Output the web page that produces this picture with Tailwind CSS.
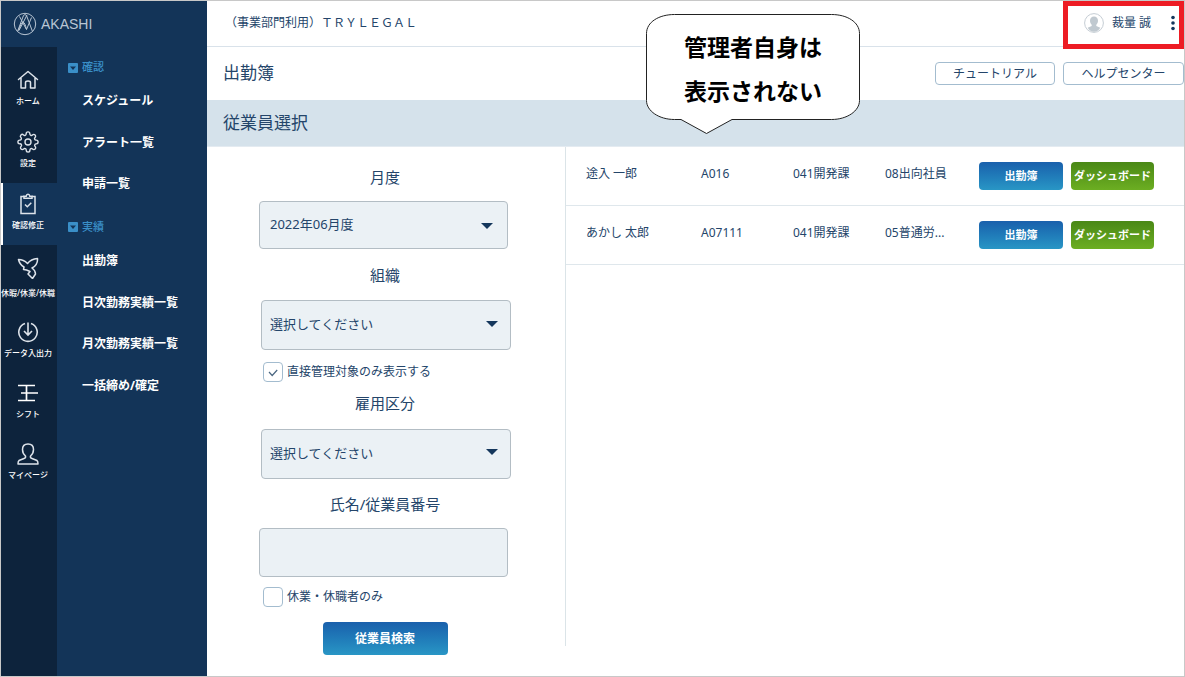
<!DOCTYPE html>
<html lang="ja">
<head>
<meta charset="utf-8">
<meta name="viewport" content="width=device-width, initial-scale=1">
<title>AKASHI 出勤簿</title>
<script src="https://cdn.jsdelivr.net/npm/@tailwindcss/browser@4"></script>
</head>
<body class="bg-white font-['Noto_Sans','Noto_Sans_CJK_JP',sans-serif] text-[#24456a]">
<div class="relative flex min-h-screen border border-[#c8c8c8]">

  <!-- Sidebar -->
  <div class="flex w-[206px] shrink-0 flex-col bg-[#133458]">
    <a href="#" class="flex h-[46px] items-center gap-1 pl-3 text-[#b9c6d4]">
      <svg class="size-6" viewBox="0 0 24 24" fill="none" stroke="currentColor" stroke-width="1"><circle cx="12" cy="12" r="10.7"/><path d="M4.500 19.500L10.500 3.500Q12 1.500 13.500 3.500L19.500 19.500M5.500 18.500Q8 11 10 10Q12 10.500 13.500 17.500L18.500 5.500M6.500 4.500L13.500 17.500M14 3L6 18.500"/></svg>
      <span class="font-['Liberation_Sans',sans-serif] text-[14px] leading-5">AKASHI</span>
    </a>
    <div class="flex grow">
      <nav aria-label="メイン" class="w-14 shrink-0 bg-[#0d233c] pt-3 text-[8px] leading-3 font-medium text-white">
        <a href="#" class="flex h-[62px] flex-col items-center gap-1 overflow-hidden pt-[10px] pr-[2px] whitespace-nowrap">
          <svg class="size-[22px] shrink-0" viewBox="0 0 22 22" fill="none" stroke="#dde3ea" stroke-width="1.500" stroke-linejoin="round" stroke-linecap="round"><path d="M1.500 10.500L11 2.500l9.500 8M4 9v10h4.500v-5.500q0-1.500 2.500-1.500t2.500 1.500V19H18V9"/></svg>
          ホーム
        </a>
        <a href="#" class="flex h-[62px] flex-col items-center gap-1 overflow-hidden pt-[10px] pr-[2px] whitespace-nowrap">
          <svg class="size-[22px] shrink-0" viewBox="0 0 24 24" fill="none" stroke="#dde3ea" stroke-width="1.500" stroke-linejoin="round"><circle cx="12" cy="12" r="3.300"/><path d="M19.400 15a1.650 1.650 0 0 0 .33 1.820l.06.06a2 2 0 1 1-2.830 2.830l-.06-.06a1.650 1.650 0 0 0-2.800 1.170V21a2 2 0 0 1-4 0v-.09a1.650 1.650 0 0 0-2.800-1.260l-.06.06a2 2 0 1 1-2.830-2.830l.06-.06A1.650 1.650 0 0 0 3.090 14H3a2 2 0 0 1 0-4h.09a1.650 1.650 0 0 0 1.260-2.800l-.06-.06a2 2 0 1 1 2.830-2.830l.06.06a1.650 1.650 0 0 0 2.820-1.280V3a2 2 0 0 1 4 0v.09a1.650 1.650 0 0 0 2.800 1.260l.06-.06a2 2 0 1 1 2.830 2.830l-.06.06A1.650 1.650 0 0 0 20.910 10H21a2 2 0 0 1 0 4h-.09a1.650 1.650 0 0 0-1.510 1z"/></svg>
          設定
        </a>
        <a href="#" aria-current="page" class="flex h-[62px] flex-col items-center gap-1 overflow-hidden border-l-2 border-white bg-[#133458] pt-[10px] pr-1 whitespace-nowrap">
          <svg class="size-[22px] shrink-0" viewBox="0 0 22 22" fill="none" stroke="#dde3ea" stroke-width="1.500"><path d="M7 3.500H4v17h14v-17h-3"/><path d="M7 5.200V3.200h2.200q.3-1.900 1.800-1.900t1.800 1.900H15v2z"/><path d="M8 11.500l2.300 2.200 4-4"/></svg>
          確認修正
        </a>
        <a href="#" class="flex h-[66px] flex-col items-center gap-2 overflow-hidden pt-3 pr-[2px] whitespace-nowrap">
          <svg class="size-[22px] shrink-0" viewBox="0 0 22 22" fill="none" stroke="#dde3ea" stroke-width="1.500" stroke-linejoin="round"><path d="M1.500 2.500Q6.500 2.500 10.500 6.500Q14 2 20.500 1.500Q21 8 15 11Q18.500 13.500 18.500 17L15.500 21.500L11 17L13 14.500Q9.500 12.500 6.500 12.500L7 10Q2.500 7.500 1.500 2.500z"/></svg>
          <span>休暇/休業/休職</span>
        </a>
        <a href="#" class="flex h-[61px] flex-col items-center gap-1 overflow-hidden pt-[10px] pr-[2px] whitespace-nowrap">
          <svg class="size-[22px] shrink-0" viewBox="0 0 22 22" fill="none" stroke="#dde3ea" stroke-width="1.600"><path d="M8 2.500A9.200 9.200 0 1 0 14 2.500M11 1.500v12M7 10l4 4 4-4"/></svg>
          データ入出力
        </a>
        <a href="#" class="flex h-[61px] flex-col items-center gap-1 overflow-hidden pt-[10px] pr-[2px] whitespace-nowrap">
          <svg class="size-[22px] shrink-0" viewBox="0 0 22 22" fill="none" stroke="#fff" stroke-width="1.700"><path d="M1 3.500h17M4 11h17M1 18.500h17M9.500 3.500v15"/></svg>
          シフト
        </a>
        <a href="#" class="flex h-[62px] flex-col items-center gap-1 overflow-hidden pt-[10px] pr-[2px] whitespace-nowrap">
          <svg class="size-[22px] shrink-0" viewBox="0 0 22 22" fill="none" stroke="#dde3ea" stroke-width="1.500" stroke-linejoin="round"><path d="M8.500 13Q5.500 10.500 5.500 6.500Q5.500 1 11 1t5.500 5.500Q16.500 10.500 13.500 13q-.5 2 1.500 2.500l5 2Q21 18.500 21 21H1q0-2.500 1-3.500l5-2Q9 15 8.500 13z"/></svg>
          マイページ
        </a>
      </nav>
      <nav aria-label="確認修正" class="grow pt-2 pl-[11px] text-[12px] font-bold text-white">
        <h2 class="flex h-[25px] items-center gap-1 text-[11px] font-medium text-[#3a8fc8]">
          <svg class="size-[10px]" viewBox="0 0 10 10"><rect width="10" height="10" rx="1" fill="#3a8fc8"/><path d="M2 3.500h6L5 7z" fill="#133458"/></svg>確認</h2>
        <ul class="pl-[14px]">
          <li><a href="#" class="flex h-[42px] items-center">スケジュール</a></li>
          <li><a href="#" class="flex h-[41px] items-center">アラート一覧</a></li>
          <li><a href="#" class="flex h-[41px] items-center">申請一覧</a></li>
        </ul>
        <h2 class="mt-[10px] flex h-[26px] items-center gap-1 text-[11px] font-medium text-[#3a8fc8]">
          <svg class="size-[10px]" viewBox="0 0 10 10"><rect width="10" height="10" rx="1" fill="#3a8fc8"/><path d="M2 3.500h6L5 7z" fill="#133458"/></svg>実績</h2>
        <ul class="pl-[14px]">
          <li><a href="#" class="flex h-[42px] items-center">出勤簿</a></li>
          <li><a href="#" class="flex h-[41px] items-center">日次勤務実績一覧</a></li>
          <li><a href="#" class="flex h-[42px] items-center">月次勤務実績一覧</a></li>
          <li><a href="#" class="flex h-[41px] items-center">一括締め/確定</a></li>
        </ul>
      </nav>
    </div>
  </div>

  <div class="flex min-w-0 grow flex-col">
    <header class="flex h-[46px] items-center justify-between border-b border-[#d9e2ea] pl-[18px] text-[12px]">
      <p class="pb-[2px] leading-5">（事業部門利用）ＴＲＹＬＥＧＡＬ</p>
      <button type="button" class="flex items-center gap-2 pr-[9px] pb-[2px] leading-5">
        <svg class="size-5" viewBox="0 0 20 20"><circle cx="10" cy="10" r="9.400" fill="#fff" stroke="#c5cdd4"/><path d="M10 3.500c2.500 0 4 1.700 4 4.200 0 1.700-.8 3.200-1.700 4v1.300l4 1.700Q14 18.800 10 18.800T3.700 14.700l4-1.700v-1.300C6.800 10.900 6 9.400 6 7.700c0-2.500 1.500-4.200 4-4.200z" fill="#c0c9d0"/></svg>
        <span>裁量 誠</span>
        <svg class="ml-3 h-4 w-1" viewBox="0 0 4 16" fill="#14375c"><circle cx="2" cy="2.500" r="1.800"/><circle cx="2" cy="8" r="1.800"/><circle cx="2" cy="13.500" r="1.800"/></svg>
      </button>
    </header>

    <div class="flex h-[53px] items-center justify-between pl-4">
      <h1 class="pb-[2px] text-[17px] leading-6">出勤簿</h1>
      <div class="flex gap-2 text-[12px] leading-5">
        <a href="#" class="flex h-[23px] w-[120px] items-center justify-center rounded border border-[#a3bccf]">チュートリアル</a>
        <a href="#" class="flex h-[23px] w-[121px] items-center justify-center rounded border border-[#a3bccf]">ヘルプセンター</a>
      </div>
    </div>
    <h2 class="flex h-[47px] items-center border-b border-[#e4ebf1] bg-[#d5e2eb] pl-4 text-[17px] leading-6">従業員選択</h2>

    <main class="flex grow items-start">
      <form class="flex w-[358px] shrink-0 flex-col items-center pt-[18px] pr-[2px]">
        <div class="flex w-[252px] flex-col">
          <label for="month" class="mb-3 text-center text-[15px] leading-6">月度</label>
          <div class="relative mr-[3px]">
            <select id="month" class="block h-[48px] w-full appearance-none rounded border border-[#b3bdc4] bg-[#ebf1f5] px-[10px] text-[13px]"><option>2022年06月度</option></select>
            <svg class="pointer-events-none absolute top-[22px] right-[15px] h-[6px] w-3" viewBox="0 0 12 6"><path d="M0 0h12L6 6z" fill="#14375c"/></svg>
          </div>

          <label for="org" class="mt-[14px] mb-[13px] text-center text-[15px] leading-6">組織</label>
          <div class="relative ml-[2px]">
            <select id="org" class="block h-[50px] w-full appearance-none rounded border border-[#b3bdc4] bg-[#ebf1f5] px-2 text-[13px]"><option>選択してください</option></select>
            <svg class="pointer-events-none absolute top-[21px] right-[13px] h-[6px] w-3" viewBox="0 0 12 6"><path d="M0 0h12L6 6z" fill="#14375c"/></svg>
          </div>
          <div class="mt-3 flex h-5 items-center gap-1 pl-1">
            <span class="relative flex">
              <input id="direct" type="checkbox" checked class="peer size-5 appearance-none rounded border border-[#a3bccf] bg-white">
              <svg class="pointer-events-none absolute inset-0 hidden size-5 peer-checked:block" viewBox="0 0 20 20" fill="none" stroke="#4a6680" stroke-width="1.200"><path d="M6 10l3.200 3.500 5-5.500"/></svg>
            </span>
            <label for="direct" class="text-[12px] leading-5 whitespace-nowrap">直接管理対象のみ表示する</label>
          </div>

          <label for="kind" class="mt-[9px] mb-[14px] text-center text-[15px] leading-6">雇用区分</label>
          <div class="relative ml-[2px]">
            <select id="kind" class="block h-[50px] w-full appearance-none rounded border border-[#b3bdc4] bg-[#ebf1f5] px-2 text-[13px]"><option>選択してください</option></select>
            <svg class="pointer-events-none absolute top-[20px] right-[13px] h-[6px] w-3" viewBox="0 0 12 6"><path d="M0 0h12L6 6z" fill="#14375c"/></svg>
          </div>

          <label for="name" class="mt-[13px] mb-3 text-center text-[15px] leading-6">氏名/従業員番号</label>
          <input id="name" type="text" class="mr-[3px] h-[49px] rounded border border-[#b3bdc4] bg-[#ebf1f5] px-2 text-[13px]">
          <div class="mt-[10px] flex h-5 items-center gap-1 pl-1">
            <span class="relative flex">
              <input id="leave" type="checkbox" class="peer size-5 appearance-none rounded border border-[#a3bccf] bg-white">
              <svg class="pointer-events-none absolute inset-0 hidden size-5 peer-checked:block" viewBox="0 0 20 20" fill="none" stroke="#4a6680" stroke-width="1.200"><path d="M6 10l3.200 3.500 5-5.500"/></svg>
            </span>
            <label for="leave" class="text-[12px] leading-5 whitespace-nowrap">休業・休職者のみ</label>
          </div>
          <button type="submit" class="mt-[15px] h-[33px] w-[125px] self-center rounded-sm bg-linear-to-b from-[#1a60ac] to-[#2996c5] text-[12px] font-bold text-white">従業員検索</button>
        </div>
      </form>

      <section class="min-h-[499px] min-w-0 grow border-l border-[#dbe4e8]">
        <table class="w-full table-fixed text-left text-[12px] leading-5">
          <colgroup><col class="w-[135px]"><col class="w-[92px]"><col class="w-[92px]"><col class="w-[94px]"><col class="w-[92px]"><col></colgroup>
          <tbody>
            <tr class="h-[58px] border-b border-[#dfe7ec]">
              <td class="pb-1 pl-[20px]">途入 一郎</td><td class="pb-1">A016</td><td class="pb-1">041開発課</td><td class="pb-1">08出向社員</td>
              <td><button type="button" class="block h-7 w-[84px] rounded-sm bg-linear-to-b from-[#1a60ac] to-[#2996c5] text-[11px] font-bold text-white">出勤簿</button></td>
              <td><button type="button" class="block h-7 w-[83px] rounded-sm bg-linear-to-b from-[#4a8816] to-[#6cae22] text-[11px] font-bold whitespace-nowrap text-white">ダッシュボード</button></td>
            </tr>
            <tr class="h-[59px] border-b border-[#dfe7ec]">
              <td class="pb-1 pl-[20px]">あかし 太郎</td><td class="pb-1">A07111</td><td class="pb-1">041開発課</td><td class="pb-1">05普通労...</td>
              <td><button type="button" class="block h-7 w-[84px] rounded-sm bg-linear-to-b from-[#1a60ac] to-[#2996c5] text-[11px] font-bold text-white">出勤簿</button></td>
              <td><button type="button" class="block h-7 w-[83px] rounded-sm bg-linear-to-b from-[#4a8816] to-[#6cae22] text-[11px] font-bold whitespace-nowrap text-white">ダッシュボード</button></td>
            </tr>
          </tbody>
        </table>
      </section>
    </main>
  </div>

  <!-- Annotations laid over the screen -->
  <div class="pointer-events-none absolute top-0 right-0 h-12 w-[121px] border-5 border-[#ed1c24]"></div>
  <div class="absolute top-[12px] left-[644px] h-[122px] w-[216px]">
    <svg class="absolute inset-0 h-full w-full" viewBox="0 0 216 122"><path d="M29.500 1.500H186.500C202 1.500 214.500 9 214.500 20.500V87.500C214.500 98 202 106.500 186.500 106.500H87L61.500 120.500L36 106.500H29.500C14 106.500 1.500 98 1.500 87.500V20.500C1.500 9 14 1.500 29.500 1.500z" fill="#fff" stroke="#222"/></svg>
    <p class="relative pt-3 text-center text-[23px] leading-[44px] font-bold text-black">管理者自身は<br>表示されない</p>
  </div>
</div>
</body>
</html>
